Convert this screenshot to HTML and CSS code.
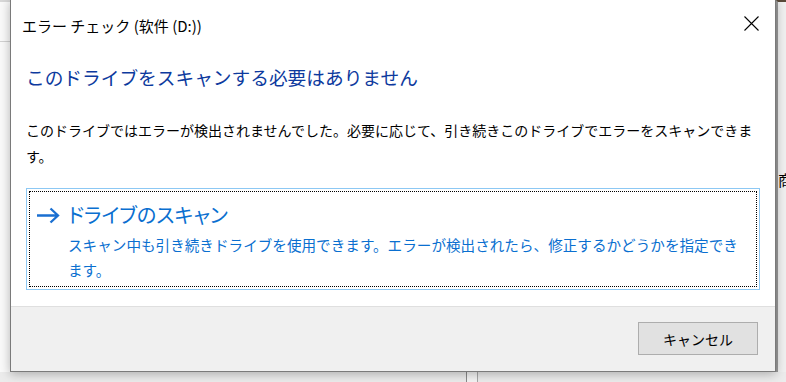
FILE: index.html
```html
<!DOCTYPE html>
<html lang="ja">
<head>
<meta charset="utf-8">
<title>エラー チェック</title>
<link rel="stylesheet" href="styles.css">
</head>
<body>
<div class="desktop">
  <div class="bg-left"></div>
  <div class="bg-right"><span class="bg-char">商</span></div>
  <div class="bg-bottom"><div class="bg-col"></div></div>
  <div class="dialog">
    <div class="titlebar">
      <span class="title">エラー チェック (软件 (D:))</span>
      <span class="close">
        <svg width="15" height="15" viewBox="0 0 15 15"><path d="M0.5 0.5 L14.5 14.5 M14.5 0.5 L0.5 14.5" stroke="#000" stroke-width="1.1" fill="none"/></svg>
      </span>
    </div>
    <div class="main">
      <h1 class="instruction">このドライブをスキャンする必要はありません</h1>
      <p class="content">このドライブではエラーが検出されませんでした。必要に応じて、引き続きこのドライブでエラーをスキャンできます。</p>
      <div class="cmdlink">
        <div class="cmdfocus">
          <svg class="arrow" width="24" height="17" viewBox="0 0 24 17"><path d="M1 8.5 H22 M14.5 1.5 L22 8.5 L14.5 15.5" stroke="#1a6fd1" stroke-width="2.3" fill="none"/></svg>
          <div class="cmdtext">
            <div class="cmdtitle">ドライブのスキャン</div>
            <div class="cmddesc">スキャン中も引き続きドライブを使用できます。エラーが検出されたら、修正するかどうかを指定できます。</div>
          </div>
        </div>
      </div>
    </div>
    <div class="footer">
      <button class="btn">キャンセル</button>
    </div>
  </div>
</div>
</body>
</html>
```
FILE: styles.css
```css
html, body {
  margin: 0;
  padding: 0;
}
body {
  background: #ffffff;
  font-family: "Noto Sans CJK JP", "Noto Sans", sans-serif;
  overflow: hidden;
}
.desktop {
  position: relative;
  width: 786px;
  height: 382px;
  overflow: hidden;
  background: #ffffff;
}
.bg-left {
  position: absolute;
  left: 0;
  top: 0;
  width: 10px;
  height: 382px;
  background: #fafafa;
  border-top: 2px solid #d8d8d8;
  box-sizing: border-box;
}
.bg-left::after {
  content: "";
  position: absolute;
  left: 0;
  top: 39px;
  width: 10px;
  height: 1px;
  background: #d2d2d2;
}
.bg-right {
  position: absolute;
  left: 776px;
  top: 0;
  width: 10px;
  height: 382px;
  background: #f0f0f0;
  border-left: 2px solid #9a9a9a;
  border-top: 2px solid #5a4a3a;
  box-sizing: border-box;
  overflow: hidden;
}
.bg-char {
  position: absolute;
  left: 0;
  top: 168px;
  font-size: 15px;
  line-height: 20px;
  color: #000;
  white-space: nowrap;
}
.bg-bottom {
  position: absolute;
  left: 0;
  top: 372px;
  width: 786px;
  height: 10px;
  background: #ececec;
}
.bg-col {
  position: absolute;
  left: 466px;
  top: 0;
  width: 10px;
  height: 10px;
  background: #f4f4f4;
  border-left: 1px solid #8a8a8a;
  border-right: 1px solid #a8a8a8;
}
.dialog {
  position: absolute;
  left: 10px;
  top: -1px;
  width: 764px;
  height: 371px;
  border: 1px solid #7a7a7a;
  background: #ffffff;
  box-shadow: 0 2px 10px rgba(0, 0, 0, 0.28);
  display: flex;
  flex-direction: column;
}
.titlebar {
  height: 46px;
  flex: none;
  display: flex;
  align-items: flex-start;
  justify-content: space-between;
  padding: 0 16px 0 11px;
  box-sizing: border-box;
}
.title {
  margin-top: 15px;
  font-size: 15px;
  line-height: 21px;
  color: #000;
}
.close {
  margin-top: 16px;
  width: 15px;
  height: 15px;
  display: block;
}
.close svg {
  display: block;
}
.main {
  flex: 1;
  padding: 0 15px;
  display: flex;
  flex-direction: column;
}
.instruction {
  margin: 17px 0 0 0;
  font-size: 18.7px;
  line-height: 28px;
  font-weight: 400;
  color: #0d3a9e;
}
.content {
  margin: 26px 0 0 0;
  font-size: 14px;
  line-height: 26px;
  color: #000;
}
.cmdlink {
  margin-top: 19px;
  border: 1px solid #8cc8f4;
}
.cmdfocus {
  margin: 2px;
  border: 1px dotted #000;
  display: flex;
  align-items: flex-start;
  padding: 8px 8px 4px 6px;
}
.arrow {
  flex: none;
  display: block;
  margin-top: 7px;
  margin-right: 8px;
}
.cmdtext {
  flex: 1;
  color: #0a6fd0;
}
.cmdtitle {
  font-size: 20.2px;
  line-height: 30px;
  font-feature-settings: "palt" 1;
}
.cmddesc {
  margin-top: 2px;
  font-size: 14.6px;
  line-height: 25px;
}
.footer {
  flex: none;
  height: 65px;
  box-sizing: border-box;
  border-top: 1px solid #dfdfdf;
  background: #f0f0f0;
  display: flex;
  justify-content: flex-end;
  align-items: flex-start;
  padding: 15px 17px 0 0;
}
.btn {
  width: 120px;
  height: 33px;
  border: 1px solid #adadad;
  background: #e1e1e1;
  font-family: "Noto Sans CJK JP", "Noto Sans", sans-serif;
  font-size: 14px;
  color: #000;
  padding: 0;
}
```
